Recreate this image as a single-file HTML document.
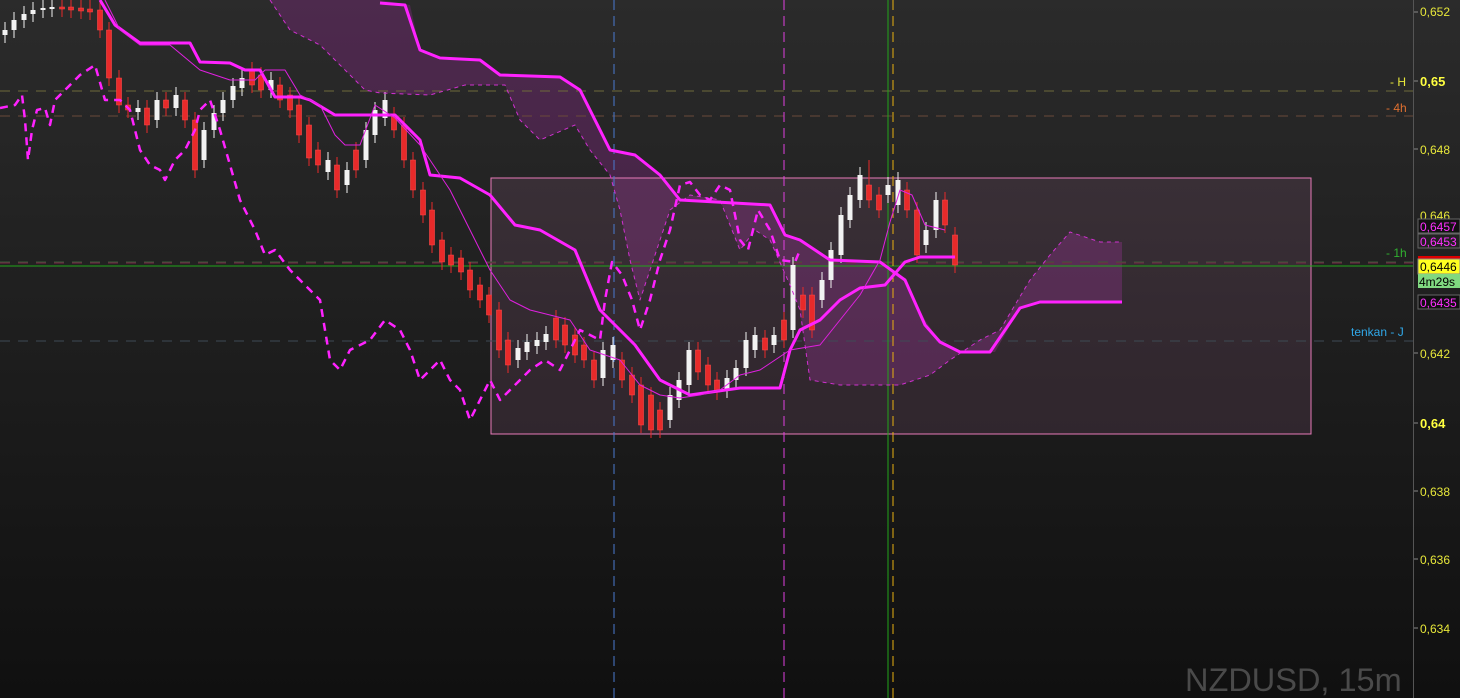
<!DOCTYPE html>
<html><head><meta charset="utf-8"><style>
html,body{margin:0;padding:0;background:#1c1c1c;overflow:hidden}
svg{display:block}
text{font-family:"Liberation Sans",sans-serif}
</style></head><body>
<svg width="1460" height="698" xmlns="http://www.w3.org/2000/svg">
<defs><linearGradient id="bg" x1="0" y1="0" x2="0" y2="1"><stop offset="0" stop-color="#2b2b2b"/><stop offset="1" stop-color="#101010"/></linearGradient></defs>
<rect width="1460" height="698" fill="url(#bg)"/>
<polygon fill="rgba(150,40,150,0.32)" points="270,0 290,30 320,45 350,75 365,90 380,93 430,95 465,85 505,85 520,120 540,140 575,125 590,150 610,175 620,210 630,260 640,300 660,240 670,210 690,195 720,200 740,250 755,230 770,240 790,285 800,310 810,380 840,385 900,385 930,375 950,360 980,340 1000,330 1030,280 1050,255 1070,232 1100,242 1122,242 1122,302 1040,302 1020,308 995,352 960,352 940,342 925,320 905,280 880,262 830,260 800,240 785,235 770,205 680,200 660,175 635,155 610,150 580,90 560,77 500,75 480,60 440,60 420,50 410,5 380,0"/>
<rect x="491" y="178" width="820" height="256" fill="rgba(230,140,200,0.11)" stroke="#e77ab8" stroke-width="1"/>
<g stroke-dasharray="10,8" stroke-width="1">
<line x1="0" y1="91" x2="1413" y2="91" stroke="#6e6a3a"/>
<line x1="0" y1="116" x2="1413" y2="116" stroke="#6a4a3a"/>
<line x1="0" y1="262" x2="1413" y2="262" stroke="#3a5a3a"/>
<line x1="0" y1="263" x2="1413" y2="263" stroke="#7a2244"/>
<line x1="0" y1="341" x2="1413" y2="341" stroke="#3e4a55"/>
</g>
<line x1="0" y1="266" x2="1413" y2="266" stroke="#22a51a" stroke-width="1"/>
<line x1="614" y1="0" x2="614" y2="698" stroke="#4a7ad0" stroke-dasharray="10,6"/>
<line x1="784" y1="0" x2="784" y2="698" stroke="#e040e0" stroke-dasharray="10,6"/>
<line x1="888" y1="0" x2="888" y2="698" stroke="#22a51a"/>
<line x1="893" y1="0" x2="893" y2="698" stroke="#e8b010" stroke-dasharray="10,6"/>
<path stroke="#f2f2f2" stroke-width="1" fill="none" d="M5 22V43M14 12V38M24 6V28M33 2V22M43 0V18M52 0V17M138 100V120M157 92V128M176 87V116M204 122V168M214 105V138M223 92V121M233 78V108M242 70V96M271 72V98M328 152V180M347 162V193M366 122V168M375 102V143M385 92V126M518 340V368M527 334V360M537 332V354M546 326V350M603 342V386M613 337V368M670 387V428M679 372V408M689 342V393M727 370V398M736 360V388M746 332V376M755 327V358M774 327V353M793 257V338M822 272V308M831 242V288M841 207V263M850 187V228M860 167V208M888 177V203M898 172V213M926 222V253M936 192V238"/>
<path fill="#f2f2f2" d="M2.5 30h5v5h-5zM11.5 20h5v10h-5zM21.5 14h5v6h-5zM30.5 10h5v4h-5zM40.5 8h5v2h-5zM49.5 7h5v2h-5zM135.5 108h5v4h-5zM154.5 100h5v20h-5zM173.5 95h5v13h-5zM201.5 130h5v30h-5zM211.5 113h5v17h-5zM220.5 100h5v13h-5zM230.5 86h5v14h-5zM239.5 78h5v10h-5zM268.5 80h5v10h-5zM325.5 160h5v12h-5zM344.5 170h5v15h-5zM363.5 130h5v30h-5zM372.5 110h5v25h-5zM382.5 100h5v18h-5zM515.5 348h5v12h-5zM524.5 342h5v10h-5zM534.5 340h5v6h-5zM543.5 334h5v8h-5zM600.5 350h5v28h-5zM610.5 345h5v15h-5zM667.5 395h5v25h-5zM676.5 380h5v20h-5zM686.5 350h5v35h-5zM724.5 378h5v12h-5zM733.5 368h5v12h-5zM743.5 340h5v28h-5zM752.5 335h5v15h-5zM771.5 335h5v10h-5zM790.5 265h5v65h-5zM819.5 280h5v20h-5zM828.5 250h5v30h-5zM838.5 215h5v40h-5zM847.5 195h5v25h-5zM857.5 175h5v25h-5zM885.5 185h5v10h-5zM895.5 180h5v25h-5zM923.5 230h5v15h-5zM933.5 200h5v30h-5z"/>
<path stroke="#e82a2a" stroke-width="1" fill="none" d="M62 0V17M71 0V18M81 0V19M90 0V20M100 2V38M109 22V86M119 70V113M128 97V118M147 100V133M166 92V116M185 92V128M195 112V178M252 62V93M261 67V98M280 77V108M290 87V118M299 97V143M309 117V166M318 142V173M337 157V198M356 142V178M394 107V138M404 117V168M413 152V198M423 182V223M432 202V253M442 232V270M451 247V273M461 250V280M470 262V298M480 277V308M489 287V323M499 302V358M508 332V373M556 310V348M565 317V353M575 327V363M584 337V368M594 352V388M622 352V388M632 367V403M641 377V433M651 387V438M660 402V438M698 342V380M708 357V393M717 372V400M765 330V358M784 312V348M803 287V318M812 287V338M869 160V208M879 187V218M907 182V218M917 202V263M945 192V233M955 227V273"/>
<path fill="#e82a2a" stroke="#ff4a4a" stroke-width="0.6" d="M59.5 7h5v2h-5zM68.5 7h5v3h-5zM78.5 8h5v3h-5zM87.5 9h5v3h-5zM97.5 10h5v20h-5zM106.5 30h5v48h-5zM116.5 78h5v27h-5zM125.5 105h5v5h-5zM144.5 108h5v17h-5zM163.5 100h5v8h-5zM182.5 100h5v20h-5zM192.5 120h5v50h-5zM249.5 70h5v15h-5zM258.5 75h5v15h-5zM277.5 85h5v15h-5zM287.5 95h5v15h-5zM296.5 105h5v30h-5zM306.5 125h5v33h-5zM315.5 150h5v15h-5zM334.5 165h5v25h-5zM353.5 150h5v20h-5zM391.5 115h5v15h-5zM401.5 125h5v35h-5zM410.5 160h5v30h-5zM420.5 190h5v25h-5zM429.5 210h5v35h-5zM439.5 240h5v22h-5zM448.5 255h5v10h-5zM458.5 258h5v14h-5zM467.5 270h5v20h-5zM477.5 285h5v15h-5zM486.5 295h5v20h-5zM496.5 310h5v40h-5zM505.5 340h5v25h-5zM553.5 318h5v22h-5zM562.5 325h5v20h-5zM572.5 335h5v20h-5zM581.5 345h5v15h-5zM591.5 360h5v20h-5zM619.5 360h5v20h-5zM629.5 375h5v20h-5zM638.5 385h5v40h-5zM648.5 395h5v35h-5zM657.5 410h5v20h-5zM695.5 350h5v22h-5zM705.5 365h5v20h-5zM714.5 380h5v12h-5zM762.5 338h5v12h-5zM781.5 320h5v20h-5zM800.5 295h5v15h-5zM809.5 295h5v35h-5zM866.5 185h5v15h-5zM876.5 195h5v15h-5zM904.5 190h5v20h-5zM914.5 210h5v45h-5zM942.5 200h5v25h-5zM952.5 235h5v30h-5z"/>
<g fill="none" stroke-linejoin="round">
<polyline stroke="#d030d0" stroke-width="1" stroke-dasharray="4,4" points="270,0 290,30 320,45 350,75 365,90 380,93 430,95 465,85 505,85 520,120 540,140 575,125 590,150 610,175 620,210 630,260 640,300 660,240 670,210 690,195 720,200 740,250 755,230 770,240 790,285 800,310 810,380 840,385 900,385 930,375 950,360 980,340 1000,330 1030,280 1050,255 1070,232 1100,242 1122,242"/>
<polyline stroke="#ff22ff" stroke-width="3" points="380,3 405,5 420,50 440,58 480,60 500,75 560,77 580,90 610,150 635,155 660,175 680,200 770,205 785,235 800,240 830,260 880,262 905,280 925,325 940,342 960,352 990,352 1020,308 1040,302 1122,302"/>
<polyline stroke="#ff22ff" stroke-width="3" points="100,0 115,25 140,43 190,43 200,62 230,63 245,70 260,70 275,97 300,97 310,100 335,115 395,115 420,140 430,175 460,178 490,195 515,225 540,230 575,250 600,310 635,345 660,380 690,395 740,388 780,388 790,350 800,330 820,320 840,300 860,288 885,285 905,262 920,257 955,257"/>
<polyline stroke="#e020e0" stroke-width="1" points="105,0 120,30 140,45 170,45 200,70 230,80 255,80 265,70 285,70 300,95 320,105 335,135 345,145 360,145 375,105 395,118 420,145 430,160 450,190 470,230 490,270 510,300 530,310 550,315 570,320 590,350 620,360 640,385 660,395 680,398 700,395 720,390 740,375 760,370 790,350 820,345 840,320 860,295 880,260 890,222 900,190 912,195 925,225 945,230"/>
<polyline stroke="#ff22ff" stroke-width="2.5" stroke-dasharray="8,6" points="0,108 15,105 22,95 25,120 28,160 32,130 37,110 45,108 50,125 55,100 65,90 80,75 95,65 105,100 120,100 130,110 140,150 150,165 160,170 165,180 175,160 185,150 195,130 200,110 210,100 220,130 240,200 255,230 265,255 275,250 290,270 300,280 320,300 330,360 340,370 350,350 370,340 385,320 400,330 410,350 420,380 430,370 440,360 450,380 460,390 470,420 480,400 490,380 500,400 510,390 520,380 530,370 545,360 560,370 570,350 580,330 600,340 605,300 612,262 622,275 632,300 640,330 650,300 660,260 670,230 680,185 690,182 700,195 710,200 720,185 730,190 740,240 748,250 758,210 770,230 780,260 795,262 800,250"/>
</g>
<line x1="1413.5" y1="0" x2="1413.5" y2="698" stroke="#555"/>
<g font-size="12" fill="#e8e83a">
<text x="1420" y="16">0,652</text>
<text x="1420" y="86" font-weight="bold" font-size="13" fill="#ffff40">0,65</text>
<text x="1420" y="154">0,648</text>
<text x="1420" y="220">0,646</text>
<text x="1420" y="358">0,642</text>
<text x="1420" y="428" font-weight="bold" font-size="13" fill="#ffff40">0,64</text>
<text x="1420" y="496">0,638</text>
<text x="1420" y="564">0,636</text>
<text x="1420" y="633">0,634</text>
</g>
<g stroke="#888"><line x1="1414" y1="12" x2="1418" y2="12"/><line x1="1414" y1="81" x2="1418" y2="81"/><line x1="1414" y1="149" x2="1418" y2="149"/><line x1="1414" y1="353" x2="1418" y2="353"/><line x1="1414" y1="423" x2="1418" y2="423"/><line x1="1414" y1="491" x2="1418" y2="491"/><line x1="1414" y1="559" x2="1418" y2="559"/><line x1="1414" y1="628" x2="1418" y2="628"/></g>
<g font-size="12">
<rect x="1418" y="219" width="42" height="14" fill="#111" stroke="#666"/><text x="1420" y="231" fill="#ff30ff">0,6457</text>
<rect x="1418" y="234" width="42" height="14" fill="#222" stroke="#666"/><text x="1420" y="246" fill="#ff30ff">0,6453</text>
<rect x="1418" y="256" width="42" height="3" fill="#d00"/>
<rect x="1418" y="259" width="42" height="15" fill="#ffff20" stroke="#888"/><text x="1420" y="271" fill="#000">0,6446</text>
<rect x="1418" y="274" width="42" height="14" fill="#80d880"/><text x="1419" y="286" fill="#000">4m29s</text>
<rect x="1418" y="295" width="42" height="14" fill="#111" stroke="#666"/><text x="1420" y="307" fill="#ff30ff">0,6435</text>
<text x="1390" y="86" fill="#e8e83a">- H</text>
<text x="1386" y="112" fill="#e07030">- 4h</text>
<text x="1386" y="257" fill="#30b030">- 1h</text>
<text x="1351" y="336" fill="#30a8e8">tenkan - J</text>
</g>
<text x="1185" y="691" font-size="32.5" fill="#4a4a4a">NZDUSD, 15m</text>
</svg>
</body></html>
